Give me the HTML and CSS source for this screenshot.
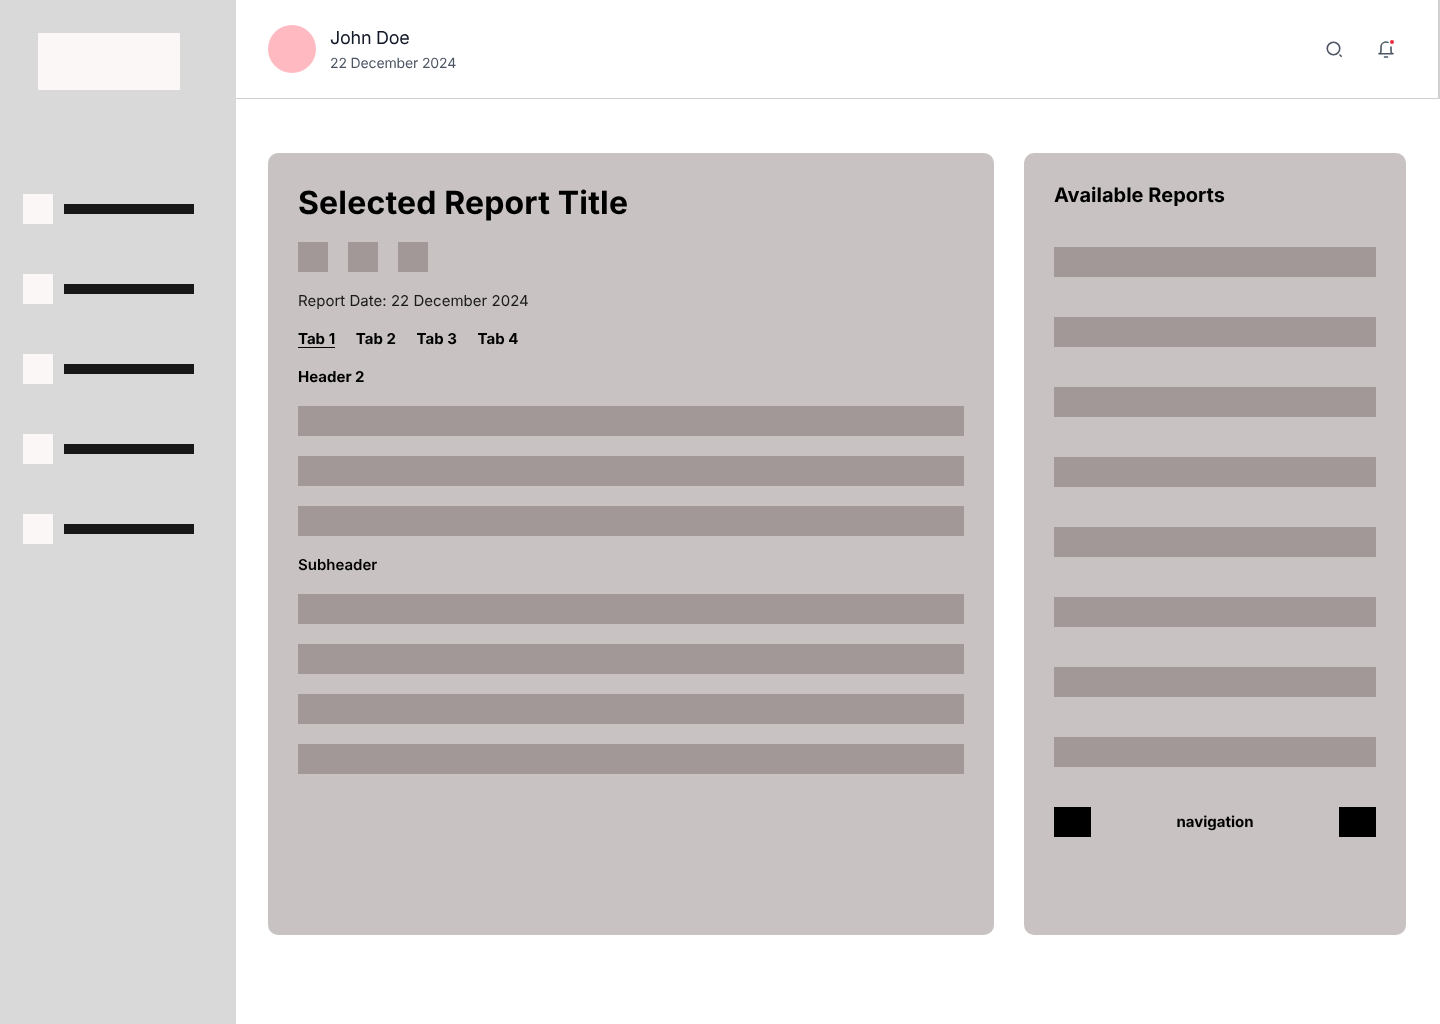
FILE: index.html
```html
<!DOCTYPE html>
<html lang="en">
<head>
<meta charset="utf-8">
<title>Reports</title>
<link rel="stylesheet" href="styles.css">
</head>
<body>
<div class="app">
  <aside class="sidebar">
    <div class="logo"></div>
    <nav class="nav">
      <div class="nav-item"><span class="nav-icon"></span><span class="nav-bar"></span></div>
      <div class="nav-item"><span class="nav-icon"></span><span class="nav-bar"></span></div>
      <div class="nav-item"><span class="nav-icon"></span><span class="nav-bar"></span></div>
      <div class="nav-item"><span class="nav-icon"></span><span class="nav-bar"></span></div>
      <div class="nav-item"><span class="nav-icon"></span><span class="nav-bar"></span></div>
    </nav>
  </aside>
  <div class="main">
    <header class="topbar">
      <div class="user">
        <div class="avatar"></div>
        <div class="user-text">
          <div class="user-name">John Doe</div>
          <div class="user-date">22 December 2024</div>
        </div>
      </div>
      <div class="actions">
        <svg class="icon" width="24" height="24" viewBox="0 0 24 24" fill="none" stroke="#4b5563" stroke-width="1.6" stroke-linecap="round"><circle cx="11.500" cy="11.500" r="6.250"/><path d="M18 18l1.200 1.200"/></svg>
        <svg class="icon" width="24" height="24" viewBox="0 0 24 24" fill="none" stroke="#4b5563" stroke-width="1.600" stroke-linecap="round" stroke-linejoin="round"><path d="M14 5.400C13.400 5.100 12.700 5 12 5c-2.800 0-5 2.200-5 5v4.500c0 1-.8 2-2 2.200h14c-1.200-.2-2-1.200-2-2.200V10"/><path d="M10.500 20h3"/><circle class="dot" cx="18" cy="5" r="2"/></svg>
      </div>
    </header>
    <div class="content">
      <section class="card report">
        <h1 class="title">Selected Report Title</h1>
        <div class="squares"><span class="square"></span><span class="square"></span><span class="square"></span></div>
        <p class="date">Report Date: 22 December 2024</p>
        <div class="tabs"><span class="tab tab-active">Tab 1</span><span class="tab">Tab 2</span><span class="tab">Tab 3</span><span class="tab">Tab 4</span></div>
        <h2 class="h2">Header 2</h2>
        <div class="rows"><div class="row"></div><div class="row"></div><div class="row"></div></div>
        <h3 class="h3">Subheader</h3>
        <div class="rows"><div class="row"></div><div class="row"></div><div class="row"></div><div class="row"></div></div>
      </section>
      <section class="card list">
        <h2 class="list-title">Available Reports</h2>
        <div class="list-rows">
          <div class="row"></div><div class="row"></div><div class="row"></div><div class="row"></div>
          <div class="row"></div><div class="row"></div><div class="row"></div><div class="row"></div>
        </div>
        <div class="pager"><span class="pager-btn"></span><span class="pager-label">navigation</span><span class="pager-btn"></span></div>
      </section>
    </div>
  </div>
</div>
</body>
</html>
```
FILE: styles.css
```css
* { box-sizing: border-box; }
html, body { margin: 0; padding: 0; }
body { font-family: Inter, "Liberation Sans", sans-serif; background: #fff; color: #000; text-rendering: geometricPrecision; }
.app { display: flex; width: 1440px; height: 1024px; overflow: hidden; will-change: opacity; }
.sidebar { width: 236px; flex: none; background: #d9d9d9; padding: 33px 0 0 23px; }
.logo { width: 142px; height: 57px; margin-left: 15px; background: #fbf7f6; }
.nav { display: flex; flex-direction: column; gap: 50px; margin-top: 104px; }
.nav-item { display: flex; align-items: center; gap: 11px; height: 30px; }
.nav-icon { width: 30px; height: 30px; background: #fbf7f6; }
.nav-bar { width: 130px; height: 10px; background: #181818; }
.main { flex: 1; min-width: 0; }
.topbar { height: 99px; display: flex; justify-content: space-between; align-items: center; padding: 0 32px; border-bottom: 1px solid #d1d1d1; border-right: 2px solid #d1d1d1; }
.user { display: flex; align-items: center; gap: 14px; }
.avatar { width: 48px; height: 48px; border-radius: 50%; background: #ffbac1; }
.user-name { font-size: 18px; line-height: 28px; color: #111827; letter-spacing: -0.015em; }
.user-date { font-size: 14px; line-height: 20px; color: #4b5563; margin-top: 1px; letter-spacing: -0.01em; }
.actions { display: flex; gap: 28px; margin-right: 8px; }
.icon { display: block; }
.dot { fill: #ef2b3c; stroke: none; }
.content { display: flex; gap: 30px; padding: 54px 34px 0 32px; }
.card { height: 782px; background: #c8c2c2; border-radius: 10px; padding: 30px; }
.report { width: 726px; }
.list { width: 382px; }
.title { margin: 0; font-size: 32px; line-height: 39px; font-weight: 700; letter-spacing: 0.16px; }
.squares { display: flex; gap: 20px; margin-top: 20px; }
.square { width: 30px; height: 30px; background: #a29898; }
.date { margin: 20px 0 0; font-size: 15px; line-height: 18px; color: #1a1a1a; letter-spacing: 0.02px; }
.tabs { display: flex; gap: 20.700px; margin-top: 20px; height: 18px; }
.tab { font-size: 15px; line-height: 18px; font-weight: 700; color: #000; }
.tab-active { border-bottom: 1px solid #000; height: 18px; }
.h2 { margin: 20px 0; font-size: 15px; line-height: 18px; font-weight: 700; }
.h3 { margin: 20px 0; font-size: 15px; line-height: 18px; font-weight: 600; }
.rows { display: flex; flex-direction: column; gap: 20px; }
.row { height: 30px; background: #a29898; }
.list-title { margin: 0; font-size: 20px; line-height: 24px; font-weight: 700; letter-spacing: 0.02px; }
.list-rows { display: flex; flex-direction: column; gap: 40px; margin-top: 40px; }
.pager { display: flex; justify-content: space-between; align-items: center; margin-top: 40px; }
.pager-btn { width: 37px; height: 30px; background: #000; }
.pager-label { font-size: 15px; line-height: 18px; font-weight: 700; margin-top: -1px; }
```
